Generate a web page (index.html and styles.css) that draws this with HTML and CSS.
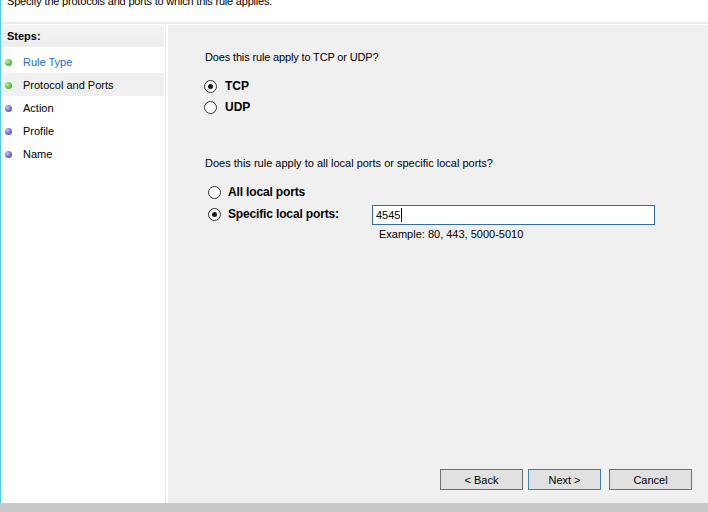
FILE: index.html
```html
<!DOCTYPE html>
<html>
<head>
<meta charset="utf-8">
<link rel="stylesheet" href="styles.css">
</head>
<body>
<div class="window">
  <div class="header">
    <div class="header-text">Specify the protocols and ports to which this rule applies.</div>
  </div>
  <div class="separator"></div>
  <div class="main">
    <div class="steps">
      <div class="steps-head">Steps:</div>
      <ul class="step-list">
        <li class="step done current-link"><span class="bullet green"></span>Rule Type</li>
        <li class="step done active"><span class="bullet green"></span>Protocol and Ports</li>
        <li class="step"><span class="bullet blue"></span>Action</li>
        <li class="step"><span class="bullet blue"></span>Profile</li>
        <li class="step"><span class="bullet blue"></span>Name</li>
      </ul>
    </div>
    <div class="spacer"></div>
    <div class="content">
      <div class="form">
        <p class="question q1">Does this rule apply to TCP or UDP?</p>
        <div class="radio-group g1">
          <label class="radio"><span class="circle checked"></span>TCP</label>
          <label class="radio"><span class="circle"></span>UDP</label>
        </div>
        <p class="question q2">Does this rule apply to all local ports or specific local ports?</p>
        <div class="radio-group g2">
          <label class="radio"><span class="circle"></span>All local ports</label>
          <div class="port-row">
            <label class="radio port-label"><span class="circle checked"></span>Specific local ports:</label>
            <div class="port-field">
              <div class="textbox">4545<span class="caret"></span></div>
              <div class="example">Example: 80, 443, 5000-5010</div>
            </div>
          </div>
        </div>
      </div>
      <div class="buttons">
        <button class="btn back">&lt; Back</button>
        <button class="btn next">Next &gt;</button>
        <button class="btn cancel">Cancel</button>
      </div>
    </div>
  </div>
</div>
<div class="statusbar"></div>
</body>
</html>
```
FILE: styles.css
```css
* { box-sizing: border-box; }
html, body { margin: 0; padding: 0; }
body {
  width: 708px;
  height: 512px;
  overflow: hidden;
  background: #ffffff;
  font-family: "Liberation Sans", Arial, sans-serif;
  font-size: 11px;
  color: #000;
}
.window {
  height: 503px;
  border-left: 1px solid #5cc8e6;
  display: flex;
  flex-direction: column;
}
.header {
  height: 22px;
  overflow: hidden;
  padding-left: 6px;
}
.header-text {
  margin-top: -6px;
  font-size: 11px;
  line-height: 14px;
  letter-spacing: -0.2px;
}
.separator {
  height: 3px;
  border-top: 2px solid #ebebeb;
}
.main {
  flex: 1;
  display: flex;
}
.steps {
  width: 165px;
  border-right: 1px solid #ececec;
  background: #fff;
}
.steps-head {
  height: 22px;
  background: linear-gradient(#f4f4f4, #ececec);
  font-weight: bold;
  padding-left: 6px;
  line-height: 22px;
  margin-right: 1px;
}
.step-list {
  list-style: none;
  margin: 3px 0 0 0;
  padding: 0;
}
.step {
  height: 23px;
  display: flex;
  align-items: center;
  padding-left: 4px;
  margin-right: 1px;
}
.step.active { background: #f0f0f0; }
.current-link { color: #1a6fcf; }
.bullet {
  width: 7px;
  height: 7px;
  border-radius: 50%;
  margin-right: 11px;
  margin-top: 1px;
}
.bullet.green { background: radial-gradient(circle at 35% 35%, #b8f0a0, #5cc23c 55%, #3e9a26); }
.bullet.blue { background: radial-gradient(circle at 35% 35%, #c8c8f4, #6e6ad8 55%, #4a46b0); }
.spacer { width: 2px; background: #fff; }
.content {
  flex: 1;
  background: #f0f0f0;
  display: flex;
  flex-direction: column;
  justify-content: space-between;
}
.form { padding-left: 37px; padding-top: 25px; }
.question { margin: 0; line-height: 14px; }
.q1 { letter-spacing: -0.15px; }
.radio-group { display: flex; flex-direction: column; }
.g1 { margin-top: 15px; gap: 7px; margin-left: -1px; }
.g1 .circle { margin-right: 8px; }
.q2 { margin-top: 42px; }
.g2 { margin-top: 15px; gap: 8px; margin-left: 3px; }
.g2 .circle { margin-right: 7px; }
.radio {
  display: flex;
  align-items: center;
  font-weight: bold;
  font-size: 12px;
  height: 14px;
}
.g2 .radio { letter-spacing: -0.15px; }
.circle {
  width: 13px;
  height: 13px;
  border: 1px solid #333;
  border-radius: 50%;
  background: #fff;
  display: flex;
  align-items: center;
  justify-content: center;
}
.circle.checked::after {
  content: "";
  width: 5px;
  height: 5px;
  border-radius: 50%;
  background: #1a1a1a;
}
.port-row { display: flex; align-items: flex-start; }
.port-label { width: 164px; }
.port-field { display: flex; flex-direction: column; margin-top: -2px; }
.textbox {
  width: 283px;
  height: 20px;
  border: 1px solid #356ca3;
  background: #fff;
  padding-left: 3px;
  line-height: 18px;
  font-size: 11px;
  display: flex;
  align-items: center;
}
.caret {
  display: inline-block;
  width: 1px;
  height: 14px;
  background: #000;
  margin-left: 1px;
}
.example { margin-top: 2px; padding-left: 7px; line-height: 14px; }
.buttons {
  display: flex;
  justify-content: flex-end;
  padding-right: 16px;
  padding-bottom: 13px;
}
.btn {
  height: 21px;
  border: 1px solid #707070;
  background: #e1e1e1;
  font-family: "Liberation Sans", Arial, sans-serif;
  font-size: 11px;
  padding: 0;
  color: #000;
}
.back { width: 83px; }
.next { width: 73px; margin-left: 5px; border-color: #3c7fb1; }
.cancel { width: 83px; margin-left: 8px; }
.statusbar { height: 9px; background: #c8c8c8; }
```
